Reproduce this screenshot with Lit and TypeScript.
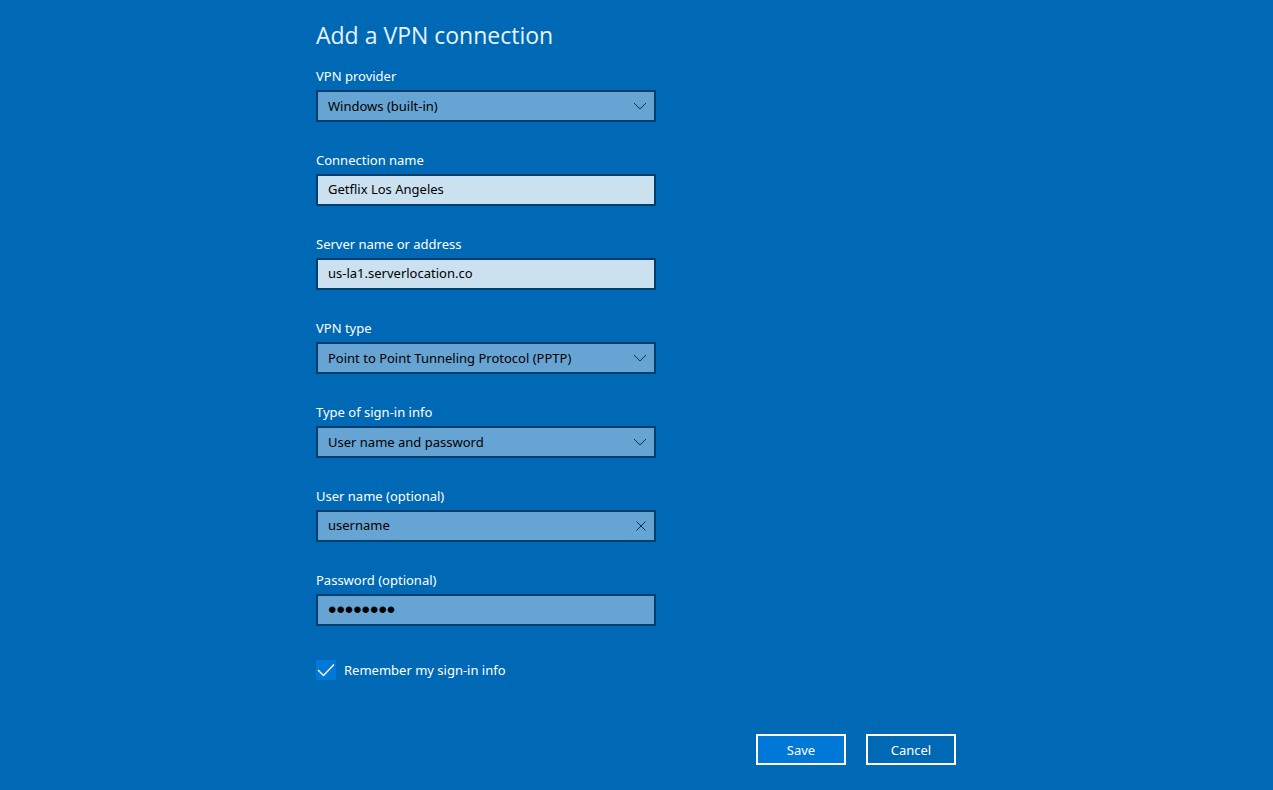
import { LitElement, html, css } from "lit";
import { customElement, state } from "lit/decorators.js";

@customElement("app-root")
export class AppRoot extends LitElement {
  @state() private userName = "username";

  static styles = css`
    :host {
      display: block;
      box-sizing: border-box;
      min-height: 100vh;
      background: #0069b5;
      color: #fff;
      font: 13px/20px "Noto Sans", sans-serif;
    }
    *, *::before { box-sizing: border-box; }
    .dialog {
      max-width: 640px;
      margin-left: max(16px, round(down, calc((100% - 640px) / 2), 1px));
      margin-right: 16px;
      padding: 19px 0 24px;
    }
    h1 { margin: 0 0 15px; font-family: "Open Sans", sans-serif; font-size: 23px; line-height: 32px; font-weight: 400; color: #e6f3ff; }
    .field { max-width: 340px; margin-bottom: 28px; }
    .label { display: block; margin-bottom: 4px; }
    .wrap { display: grid; align-items: center; }
    .wrap > * { grid-row: 1; grid-column: 1; }
    .control {
      width: 100%;
      height: 32px;
      margin: 0;
      padding: 0 32px 2px 10px;
      border: 2px solid #003f6d;
      border-radius: 0;
      background: #66a5d3;
      color: #000;
      font: inherit;
      appearance: none;
      outline: none;
    }
    select.control { padding-bottom: 0; }
    .filled { background: #cce1f0; }
    .control.secret { padding-bottom: 0; font-family: "Liberation Sans", sans-serif; font-size: 24px; }
    .icon { justify-self: end; margin-right: 10px; width: 12px; height: 12px; pointer-events: none; color: #08304f; }
    .icon path, .tick path { fill: none; stroke: currentColor; }
    .tick path { stroke-width: 1.4; }
    .clear {
      justify-self: end;
      display: flex;
      align-items: center;
      height: 28px;
      padding: 0;
      border: 0;
      background: none;
    }
    .clear .icon { margin-right: 9px; }
    .remember { display: inline-grid; grid-template-columns: 20px auto; column-gap: 8px; align-items: center; margin-top: 6px; }
    .box { appearance: none; grid-row: 1; grid-column: 1; width: 20px; height: 20px; margin: 0; border: 2px solid #fff; }
    .box:checked { background: #0078d7; border-color: #0078d7; }
    .tick { grid-row: 1; grid-column: 1; width: 20px; height: 20px; pointer-events: none; visibility: hidden; }
    .box:checked + .tick { visibility: visible; }
    .actions { display: flex; justify-content: flex-end; gap: 20px; margin-top: 49px; }
    .button { width: 90px; height: 31px; padding: 0; border: 2px solid #fff; background: transparent; color: #fff; font: inherit; }
    .primary { background: #0078d7; }
  `;

  private select(id: string, label: string, value: string) {
    return html`<div class="field">
      <label class="label" for=${id}>${label}</label>
      <div class="wrap">
        <select class="control" id=${id}><option>${value}</option></select>
        <svg class="icon" viewBox="0 0 12 12" aria-hidden="true"><path d="M0 3l6 6 6-6" /></svg>
      </div>
    </div>`;
  }

  private text(id: string, label: string, value: string) {
    return html`<div class="field">
      <label class="label" for=${id}>${label}</label>
      <div class="wrap"><input class="control filled" id=${id} type="text" .value=${value} /></div>
    </div>`;
  }

  render() {
    return html`<form class="dialog" @submit=${(e: Event) => e.preventDefault()}>
      <h1>Add a VPN connection</h1>
      ${this.select("provider", "VPN provider", "Windows (built-in)")}
      ${this.text("connection", "Connection name", "Getflix Los Angeles")}
      ${this.text("server", "Server name or address", "us-la1.serverlocation.co")}
      ${this.select("type", "VPN type", "Point to Point Tunneling Protocol (PPTP)")}
      ${this.select("signin", "Type of sign-in info", "User name and password")}
      <div class="field">
        <label class="label" for="user">User name (optional)</label>
        <div class="wrap">
          <input class="control" id="user" type="text" .value=${this.userName}
            @input=${(e: Event) => (this.userName = (e.target as HTMLInputElement).value)} />
          <button class="clear" type="button" aria-label="Clear user name" @click=${() => (this.userName = "")}>
            <svg class="icon" viewBox="0 0 12 12" aria-hidden="true"><path d="M1.500 1.500l9 9M10.500 1.500l-9 9" /></svg>
          </button>
        </div>
      </div>
      <div class="field">
        <label class="label" for="password">Password (optional)</label>
        <div class="wrap"><input class="control secret" id="password" type="password" .value=${"password"} /></div>
      </div>
      <label class="remember">
        <input class="box" type="checkbox" checked />
        <svg class="tick" viewBox="0 0 20 20" aria-hidden="true"><path d="M2 10l5.500 5.500L18 4.500" /></svg>
        <span>Remember my sign-in info</span>
      </label>
      <div class="actions">
        <button class="button primary" type="submit">Save</button>
        <button class="button" type="button">Cancel</button>
      </div>
    </form>`;
  }
}
